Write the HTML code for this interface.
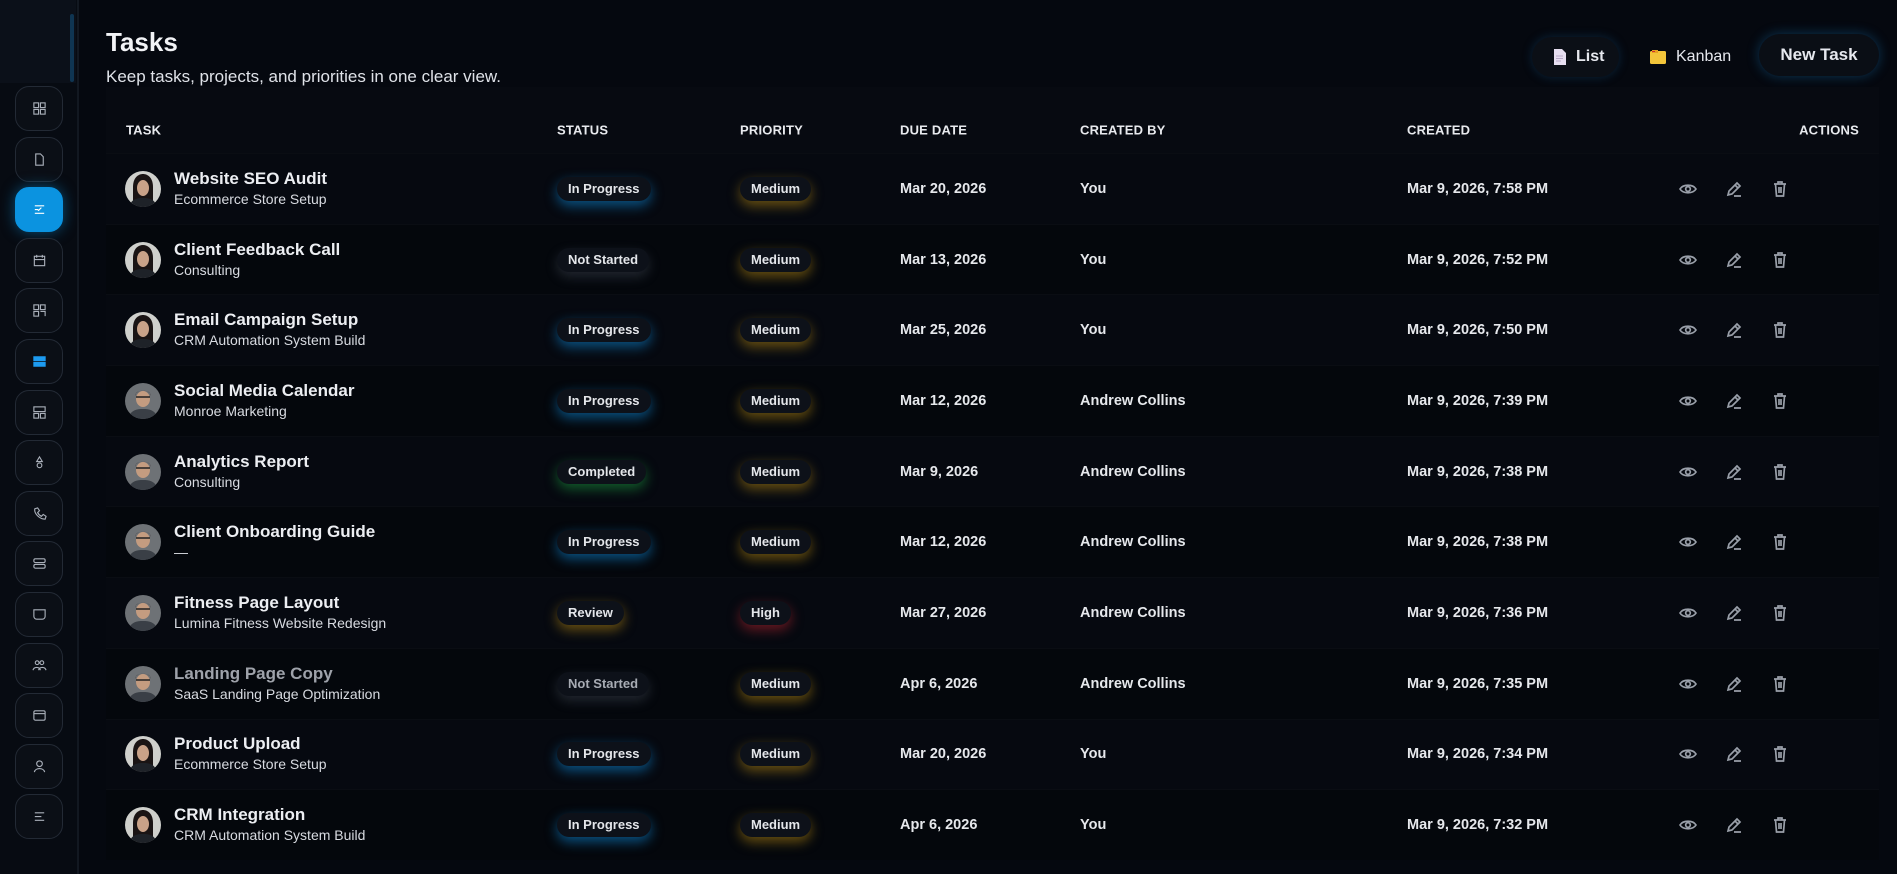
<!DOCTYPE html>
<html><head><meta charset="utf-8"><style>
*{box-sizing:border-box;margin:0;padding:0}
body{width:1897px;height:874px;background:#05080f;font-family:"Liberation Sans",sans-serif;color:#e6e8ee;position:relative;overflow:hidden}
.side{position:absolute;left:0;top:0;width:79px;height:874px;background:#070b12;border-right:2px solid #121821}
.sidetop{position:absolute;left:0;top:0;width:76px;height:83px;background:#0b1019}
.scroll{position:absolute;left:70px;top:14px;width:4px;height:68px;background:#0f3552;border-radius:2px}
.sb{position:absolute;left:15px;width:48px;height:45px;border:1.5px solid #232a35;border-radius:14px;background:#0b0f16;display:flex;align-items:center;justify-content:center}
.sb.act{background:#0b93e0;border-color:#0b93e0;box-shadow:0 0 14px rgba(11,147,224,.5)}
.sb svg{width:15px;height:15px;fill:none;stroke:#aab0ba;stroke-width:1.2}
h1{position:absolute;left:106px;top:27px;font-size:26px;font-weight:700;color:#f2f3f6}
.sub{position:absolute;left:106px;top:67px;font-size:17px;color:#dfe2e8}
.btn{position:absolute;height:40px;border-radius:20px;display:flex;align-items:center;font-size:16px;font-weight:700;color:#e6e8ee}
.tbl{position:absolute;left:106px;top:87px;width:1773px}
.hr{height:66px;background:#070a11;position:relative;font-size:13px;font-weight:700;color:#e8eaee;letter-spacing:.2px}
.hr span{position:absolute;top:43px;transform:translateY(-50%)}
.row{height:70.7px;position:relative;border-top:1px solid #0a0d13}
.row:nth-child(odd){background:#060910}
.row:nth-child(even){background:#04070c}
.row>*{position:absolute;top:50%;transform:translateY(-50%)}
.av{left:19px;width:36px;height:36px;border-radius:50%;overflow:hidden}
.nm{left:68px;font-size:17px;font-weight:700;color:#eceef2;line-height:20px;margin-top:-10px}
.ps{left:68px;font-size:14px;color:#d8dbe1;margin-top:10px}
.bd{height:24px;line-height:24px;padding:0 11px;border-radius:12px;background:#0d1119;font-size:13px;font-weight:700;color:#e4e6ea}
.blue{box-shadow:0 5px 12px rgba(14,140,220,.55)}
.yel{box-shadow:0 5px 12px rgba(200,150,20,.5)}
.grn{box-shadow:0 5px 12px rgba(30,170,70,.5)}
.red{box-shadow:0 5px 12px rgba(200,40,50,.5)}
.gry{box-shadow:0 5px 12px rgba(120,130,150,.25)}
.t{font-size:14.5px;font-weight:700;color:#e6e8ec}
.ic{width:20px;height:20px;fill:none;stroke:#9aa0aa;stroke-width:1.7}
</style></head><body>
<div class="side"><div class="sidetop"></div><div class="scroll"></div></div>
<div id="sbs"></div>

<h1>Tasks</h1>
<div class="sub">Keep tasks, projects, and priorities in one clear view.</div>

<div class="btn" style="left:1532px;top:37px;width:87px;background:#0b0f16;box-shadow:0 0 10px rgba(20,90,140,.35);padding-left:21px"><svg width="13" height="16" viewBox="0 0 13 16" style="margin-right:10px"><path d="M1 0h8l4 4v12H1z" fill="#e6def0"/><path d="M3 7h7M3 9.5h7M3 12h5" stroke="#b8a8c8" stroke-width="1"/></svg>List</div>
<div class="btn" style="left:1650px;top:37px;font-weight:400;padding-left:0"><svg width="16" height="14" viewBox="0 0 16 14" style="margin-right:10px"><rect x="0" y="1" width="16" height="13" rx="1.5" fill="#f3c53a"/><rect x="2" y="0" width="6" height="3" fill="#e8a020"/><rect x="2" y="1" width="3" height="1" fill="#d03030"/></svg>Kanban</div>
<div class="btn" style="left:1759px;top:34px;width:120px;height:42px;border-radius:21px;background:#0a0e15;box-shadow:0 0 12px rgba(20,110,170,.45);justify-content:center;font-size:17px">New Task</div>

<div class="tbl">
<div class="hr"><span style="left:20px">TASK</span><span style="left:451px">STATUS</span><span style="left:634px">PRIORITY</span><span style="left:794px">DUE DATE</span><span style="left:974px">CREATED BY</span><span style="left:1301px">CREATED</span><span style="right:20px">ACTIONS</span></div>
<div id="rows"></div>
</div>
<svg width="0" height="0" style="position:absolute"><defs>
<g id="f"><rect width="36" height="36" fill="#cfd0cc"/><path d="M8 36V16c0-9 5-13 10-13s10 4 10 13v20z" fill="#1a1414"/><ellipse cx="18" cy="17" rx="6" ry="8" fill="#c9a288"/><path d="M4 36c2-8 8-9 14-9s12 1 14 9z" fill="#1e2228"/></g>
<g id="m"><rect width="36" height="36" fill="#6e7276"/><ellipse cx="18" cy="16" rx="7" ry="8" fill="#c49c80"/><path d="M10 13c0-7 16-7 16 0l-1-3c-3-3-11-3-14 0z" fill="#2a2220"/><path d="M11 14h14" stroke="#222" stroke-width="1.5"/><path d="M3 36c2-9 9-10 15-10s13 1 15 10z" fill="#3a3f46"/></g>
</defs></svg>
<script>
const S=[
'<svg viewBox="0 0 16 16"><rect x="2" y="2" width="5" height="5"/><rect x="9" y="2" width="5" height="5"/><rect x="2" y="9" width="5" height="5"/><rect x="9" y="9" width="5" height="5"/></svg>',
'<svg viewBox="0 0 16 16"><path d="M4 2h5l3 3v9H4z"/></svg>',
'<svg viewBox="0 0 16 16" style="stroke:#fff"><path d="M3 4h10M3 8h3l1 1 3-3M3 12h10"/></svg>',
'<svg viewBox="0 0 16 16"><rect x="2.5" y="3.5" width="11" height="10"/><path d="M2.5 7h11M5 2v3M11 2v3"/></svg>',
'<svg viewBox="0 0 16 16"><rect x="2" y="2" width="5" height="5"/><rect x="9" y="2" width="5" height="5"/><rect x="2" y="9" width="5" height="5"/><path d="M9 9h5v5"/></svg>',
'<svg viewBox="0 0 16 16" style="stroke:#1d9bf0;fill:#1d9bf0"><rect x="2" y="3" width="12" height="4"/><rect x="2" y="9" width="12" height="4"/></svg>',
'<svg viewBox="0 0 16 16"><rect x="2" y="2" width="12" height="5"/><rect x="2" y="9" width="5" height="5"/><rect x="9" y="9" width="5" height="5"/></svg>',
'<svg viewBox="0 0 16 16"><path d="M8 2l3 5H5z"/><circle cx="8" cy="11" r="2.5"/></svg>',
'<svg viewBox="0 0 16 16"><path d="M3 3l3-1 2 3-2 2c1 2 2 3 4 4l2-2 3 2-1 3C8 14 2 8 3 3z"/></svg>',
'<svg viewBox="0 0 16 16"><rect x="2" y="3" width="12" height="4" rx="1.5"/><rect x="2" y="9" width="12" height="4" rx="1.5"/></svg>',
'<svg viewBox="0 0 16 16"><path d="M2 3h12v7a3 3 0 0 1-3 3H5a3 3 0 0 1-3-3z"/></svg>',
'<svg viewBox="0 0 16 16"><circle cx="5.5" cy="5" r="2"/><circle cx="10.5" cy="5" r="2"/><path d="M1 13c1-4 7-4 8 0M7 13c1-4 7-4 8 0"/></svg>',
'<svg viewBox="0 0 16 16"><rect x="2" y="3" width="12" height="10" rx="1.5"/><path d="M2 6h12"/></svg>',
'<svg viewBox="0 0 16 16"><circle cx="8" cy="5" r="3"/><path d="M2.5 14c1-5 10-5 11 0"/></svg>',
'<svg viewBox="0 0 16 16"><path d="M3 4h10M3 8h7M3 12h10"/></svg>'];
let s='';S.forEach((x,i)=>{s+=`<div class="sb${i==2?' act':''}" style="top:${(86+i*50.6).toFixed(1)}px">${x}</div>`});
document.getElementById('sbs').innerHTML=s;
const R=[
["Website SEO Audit","Ecommerce Store Setup","In Progress","blue","Medium","yel","Mar 20, 2026","You","Mar 9, 2026, 7:58 PM","f"],
["Client Feedback Call","Consulting","Not Started","gry","Medium","yel","Mar 13, 2026","You","Mar 9, 2026, 7:52 PM","f"],
["Email Campaign Setup","CRM Automation System Build","In Progress","blue","Medium","yel","Mar 25, 2026","You","Mar 9, 2026, 7:50 PM","f"],
["Social Media Calendar","Monroe Marketing","In Progress","blue","Medium","yel","Mar 12, 2026","Andrew Collins","Mar 9, 2026, 7:39 PM","m"],
["Analytics Report","Consulting","Completed","grn","Medium","yel","Mar 9, 2026","Andrew Collins","Mar 9, 2026, 7:38 PM","m"],
["Client Onboarding Guide","—","In Progress","blue","Medium","yel","Mar 12, 2026","Andrew Collins","Mar 9, 2026, 7:38 PM","m"],
["Fitness Page Layout","Lumina Fitness Website Redesign","Review","yel","High","red","Mar 27, 2026","Andrew Collins","Mar 9, 2026, 7:36 PM","m"],
["Landing Page Copy","SaaS Landing Page Optimization","Not Started","gry","Medium","yel","Apr 6, 2026","Andrew Collins","Mar 9, 2026, 7:35 PM","m"],
["Product Upload","Ecommerce Store Setup","In Progress","blue","Medium","yel","Mar 20, 2026","You","Mar 9, 2026, 7:34 PM","f"],
["CRM Integration","CRM Automation System Build","In Progress","blue","Medium","yel","Apr 6, 2026","You","Mar 9, 2026, 7:32 PM","f"]];
const eye='<svg class="ic" viewBox="0 0 20 20"><path d="M2 10c3-5 13-5 16 0-3 5-13 5-16 0z"/><circle cx="10" cy="10" r="2.3"/></svg>';
const pen='<svg class="ic" viewBox="0 0 20 20"><path d="M4 16l1-4 8-8 3 3-8 8zM11 6l3 3M10 17h7"/></svg>';
const bin='<svg class="ic" viewBox="0 0 20 20"><path d="M4 5h12M8 5V3h4v2M5.5 5l1 12h7l1-12M9 8v6M11 8v6"/></svg>';
let h='';
R.forEach((r,i)=>{const d=i==7;
h+=`<div class="row"><svg class="av" viewBox="0 0 36 36"><use href="#${r[9]}"/></svg>
<div class="nm" style="${d?'color:#9ea2aa':''}">${r[0]}</div><div class="ps">${r[1]}</div>
<div class="bd ${r[3]}" style="left:451px;${d?'color:#a8acb4':''}">${r[2]}</div>
<div class="bd ${r[5]}" style="left:634px">${r[4]}</div>
<div class="t" style="left:794px">${r[6]}</div><div class="t" style="left:974px">${r[7]}</div><div class="t" style="left:1301px">${r[8]}</div>
<div style="left:1572px;display:flex;gap:26px">${eye}${pen}${bin}</div></div>`;});
document.getElementById('rows').innerHTML=h;
</script>
</body></html>
